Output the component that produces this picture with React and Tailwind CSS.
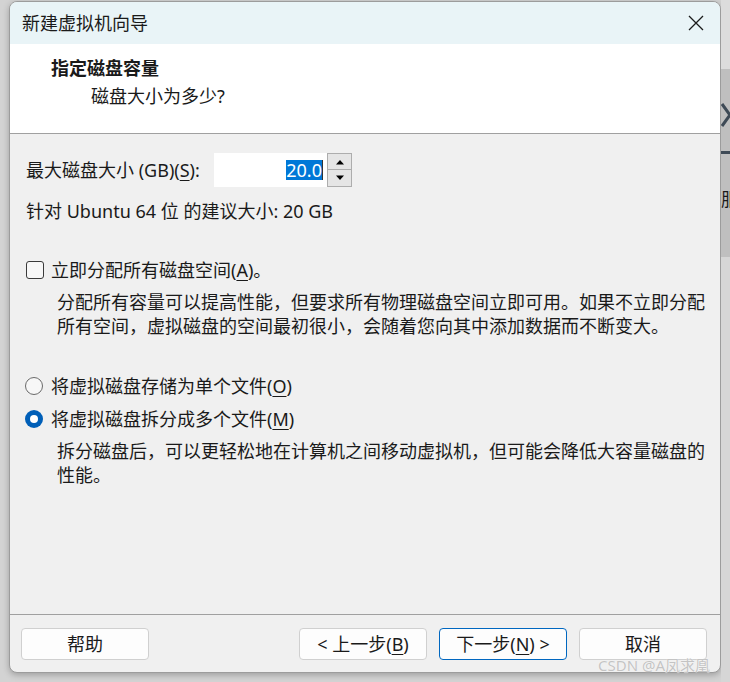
import React from "react";

const U = ({ children }) => <span className="underline underline-offset-[3px]">{children}</span>;

function CloseIcon() {
  return (
    <svg width="16" height="16" viewBox="0 0 16 16" className="text-[#1b1b1b]">
      <path d="M1 1 L15 15 M15 1 L1 15" stroke="currentColor" strokeWidth="1.3" />
    </svg>
  );
}

function Spinner() {
  return (
    <div className="flex h-[34px] w-[25px] flex-col border border-[#adadad] bg-[#e5e5e5]">
      <div className="flex h-[16px] items-center justify-center border-b border-[#adadad]">
        <svg width="10" height="6" viewBox="0 0 10 6">
          <path d="M1 5.5 L5 1 L9 5.5 Z" fill="#000" />
        </svg>
      </div>
      <div className="flex flex-1 items-center justify-center">
        <svg width="10" height="6" viewBox="0 0 10 6">
          <path d="M1 0.5 L5 5 L9 0.5 Z" fill="#000" />
        </svg>
      </div>
    </div>
  );
}

function Button({ children, primary }) {
  return (
    <button
      className={
        primary
          ? "h-[32px] w-[128px] rounded-[4px] border border-[#0067c0] bg-[#fdfdfd] text-[18px] leading-none text-[#1a1a1a]"
          : "h-[32px] w-[128px] rounded-[4px] border border-[#d0d0d0] bg-[#fdfdfd] text-[18px] leading-none text-[#1a1a1a]"
      }
    >
      {children}
    </button>
  );
}

export default function App() {
  return (
    <div className="relative flex h-[682px] w-[730px] overflow-hidden bg-[#d3d3d3] font-['Noto_Sans','Noto_Sans_CJK_SC',sans-serif] text-[#1a1a1a]">
      {/* dialog window */}
      <div className="ml-[9px] mt-[1px] flex h-[672px] w-[712px] flex-col overflow-hidden rounded-[8px] border border-[#9c9c9c] bg-[#f0f0f0] shadow-[0_2px_6px_rgba(0,0,0,0.25)]">
        {/* title bar */}
        <div className="flex h-[42px] items-center justify-between bg-[#e9f4f7] pl-[12px] pr-[16px]">
          <span className="text-[18px] leading-none">新建虚拟机向导</span>
          <CloseIcon />
        </div>

        {/* header */}
        <div className="h-[90px] border-b border-[#a0a0a0] bg-white pl-[41px] pt-[12px]">
          <div className="text-[18px] font-bold leading-[24px]">指定磁盘容量</div>
          <div className="mt-[4px] pl-[40px] text-[18px] leading-[24px]">磁盘大小为多少?</div>
        </div>

        {/* body */}
        <div className="flex-1 whitespace-nowrap pl-[16px] pr-[10px] text-[18px]">
          <div className="mt-[19px] flex h-[34px] items-center">
            <span className="w-[188px] leading-[24px]">
              最大磁盘大小 (GB)(<U>S</U>):
            </span>
            <div className="flex h-[34px] w-[113px] items-center justify-end bg-white pr-[4px]">
              <span className="bg-[#0078d7] leading-[20px] text-white">20.0</span>
              <span className="h-[20px] w-[1px] bg-[#333]" />
            </div>
            <Spinner />
          </div>

          <div className="mt-[12px] leading-[24px]">针对 Ubuntu 64 位 的建议大小: 20 GB</div>

          <div className="mt-[35px] flex items-center leading-[24px]">
            <span className="h-[18px] w-[18px] rounded-[3px] border border-[#3a3a3a] bg-[#f7f7f7]" />
            <span className="ml-[7px]">
              立即分配所有磁盘空间(<U>A</U>)。
            </span>
          </div>
          <div className="mt-[8px] pl-[31px] leading-[24px]">
            <div>分配所有容量可以提高性能，但要求所有物理磁盘空间立即可用。如果不立即分配</div>
            <div>所有空间，虚拟磁盘的空间最初很小，会随着您向其中添加数据而不断变大。</div>
          </div>

          <div className="mt-[36px] flex items-center leading-[24px]">
            <span className="-ml-[1px] h-[18px] w-[18px] rounded-full border border-[#6a6a6a] bg-[#f7f7f7]" />
            <span className="ml-[8px]">
              将虚拟磁盘存储为单个文件(<U>O</U>)
            </span>
          </div>
          <div className="mt-[9px] flex items-center leading-[24px]">
            <span className="-ml-[1px] flex h-[18px] w-[18px] items-center justify-center rounded-full bg-[#005fb8]">
              <span className="h-[8px] w-[8px] rounded-full bg-white" />
            </span>
            <span className="ml-[8px]">
              将虚拟磁盘拆分成多个文件(<U>M</U>)
            </span>
          </div>
          <div className="mt-[9px] pl-[31px] leading-[23.5px]">
            <div>拆分磁盘后，可以更轻松地在计算机之间移动虚拟机，但可能会降低大容量磁盘的</div>
            <div>性能。</div>
          </div>
        </div>

        {/* footer */}
        <div className="flex border-t border-[#a0a0a0] pb-[12px] pl-[11px] pr-[13px] pt-[13px]">
          <Button>帮助</Button>
          <div className="flex-1" />
          <div className="flex gap-[12px]">
            <Button>
              &lt; 上一步(<U>B</U>)
            </Button>
            <Button primary>
              下一步(<U>N</U>) &gt;
            </Button>
            <Button>取消</Button>
          </div>
        </div>
      </div>

      {/* window behind, right edge */}
      <div className="flex w-[9px] flex-col overflow-hidden">
        <div className="h-[69px] bg-[#dcdcdc]" />
        <div className="flex h-[188px] flex-col bg-[#bfbfbf]">
          <svg width="9" height="30" viewBox="0 0 9 30" className="mt-[31px]">
            <path d="M1 4 L9 15 L1 26" stroke="#3e4a56" strokeWidth="3" fill="none" />
          </svg>
          <div className="mt-[21px] h-[3px] w-[9px] bg-[#3e4a56]" />
          <div className="mt-[33px] whitespace-nowrap text-[18px] leading-[24px] text-[#1a1a1a]">服</div>
        </div>
        <div className="flex-1 bg-[#d6d6d6]" />
      </div>

      {/* watermark */}
      <div className="absolute left-[598px] top-[655px] text-[15px] leading-[20px] text-[#c4c4c4] [text-shadow:0_0_1px_#ffffff]">
        CSDN @A凤求凰
      </div>
    </div>
  );
}
